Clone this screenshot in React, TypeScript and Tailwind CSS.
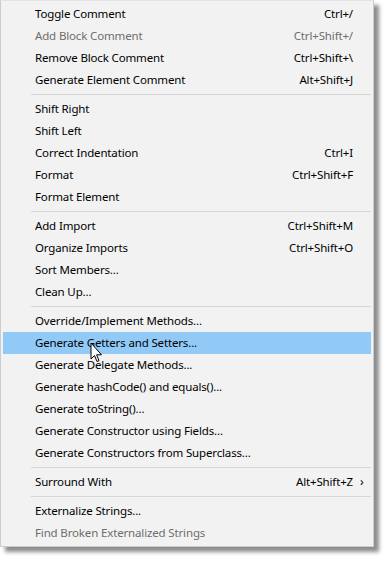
import React from "react";

type Item =
  | { sep: true }
  | { label: string; shortcut?: string; disabled?: boolean; active?: boolean; submenu?: boolean };

const items: Item[] = [
  { label: "Toggle Comment", shortcut: "Ctrl+/" },
  { label: "Add Block Comment", shortcut: "Ctrl+Shift+/", disabled: true },
  { label: "Remove Block Comment", shortcut: "Ctrl+Shift+\\" },
  { label: "Generate Element Comment", shortcut: "Alt+Shift+J" },
  { sep: true },
  { label: "Shift Right" },
  { label: "Shift Left" },
  { label: "Correct Indentation", shortcut: "Ctrl+I" },
  { label: "Format", shortcut: "Ctrl+Shift+F" },
  { label: "Format Element" },
  { sep: true },
  { label: "Add Import", shortcut: "Ctrl+Shift+M" },
  { label: "Organize Imports", shortcut: "Ctrl+Shift+O" },
  { label: "Sort Members..." },
  { label: "Clean Up..." },
  { sep: true },
  { label: "Override/Implement Methods..." },
  { label: "Generate Getters and Setters...", active: true },
  { label: "Generate Delegate Methods..." },
  { label: "Generate hashCode() and equals()..." },
  { label: "Generate toString()..." },
  { label: "Generate Constructor using Fields..." },
  { label: "Generate Constructors from Superclass..." },
  { sep: true },
  { label: "Surround With", shortcut: "Alt+Shift+Z", submenu: true },
  { sep: true },
  { label: "Externalize Strings..." },
  { label: "Find Broken Externalized Strings", disabled: true },
];

function Cursor() {
  return (
    <svg
      className="absolute left-[90px] top-[342px]"
      width="13"
      height="21"
      viewBox="0 0 13 21"
    >
      <path
        d="M1 1 L1 17 L4.5 13.5 L7 19.5 L9 18.7 L6.6 12.8 L11.5 12.8 Z"
        fill="#fff"
        stroke="#000"
        strokeWidth="1"
        strokeLinejoin="miter"
      />
    </svg>
  );
}

export default function App() {
  return (
    <div className="relative w-[389px] h-[562px] bg-white" style={{ fontFamily: '"Noto Sans", sans-serif' }}>
      <div className="w-[374px] bg-[#f2f2f2] border border-[#cccccc] border-t-[#e3e3e3] p-[2px] shadow-[5px_5px_4px_rgba(0,0,0,0.45)] text-[11.5px] tracking-[-0.15px] leading-[22px] text-black">
        {items.map((it, i) =>
          "sep" in it ? (
            <div key={i} className="h-[7px] flex items-center pl-[28px]">
              <div className="h-px w-full bg-[#d7d7d7]" />
            </div>
          ) : (
            <div
              key={i}
              className={
                "h-[22px] flex items-center pl-[32px] pr-[18px] " +
                (it.active ? "bg-[#91c9f7] " : "") +
                (it.disabled ? "text-[#6d6d6d]" : "")
              }
            >
              <span className="flex-1 whitespace-nowrap">{it.label}</span>
              {it.shortcut && <span className="whitespace-nowrap">{it.shortcut}</span>}
              {it.submenu && (
                <span className="absolute left-[360px] text-[12px]">›</span>
              )}
            </div>
          )
        )}
      </div>
      <Cursor />
    </div>
  );
}
